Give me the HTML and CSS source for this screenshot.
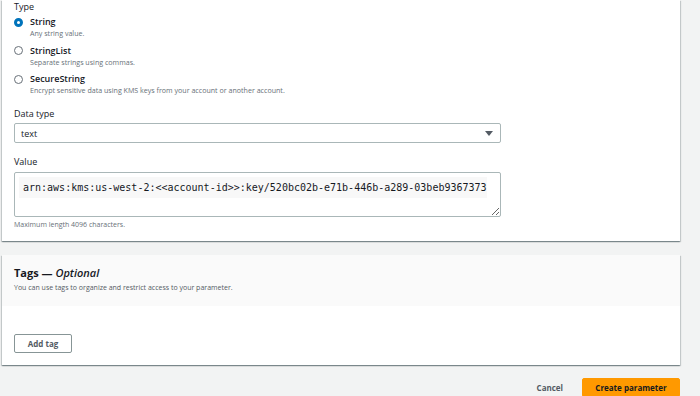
FILE: index.html
```html
<!DOCTYPE html>
<html lang="en">
<head>
    <meta charset="UTF-8">
    <meta name="viewport" content="width=device-width, initial-scale=1.0">
    <title>Create parameter</title>
    <link rel="stylesheet" href="styles.css">
</head>
<body>
    <div class="page">
        <section class="card card-main">
            <div class="field">
                <div class="label">Type</div>
                <div class="radio-group">
                    <div class="radio checked">
                        <span class="dot"></span>
                        <div class="radio-text">
                            <div class="radio-title">String</div>
                            <div class="radio-desc">Any string value.</div>
                        </div>
                    </div>
                    <div class="radio">
                        <span class="dot"></span>
                        <div class="radio-text">
                            <div class="radio-title">StringList</div>
                            <div class="radio-desc">Separate strings using commas.</div>
                        </div>
                    </div>
                    <div class="radio">
                        <span class="dot"></span>
                        <div class="radio-text">
                            <div class="radio-title">SecureString</div>
                            <div class="radio-desc">Encrypt sensitive data using KMS keys from your account or another account.</div>
                        </div>
                    </div>
                </div>
            </div>

            <div class="field">
                <div class="label">Data type</div>
                <div class="select">
                    <span>text</span>
                    <svg width="8" height="5" viewBox="0 0 8 5"><path d="M0 0 H8 L4 5 Z" fill="#545b64"/></svg>
                </div>
            </div>

            <div class="field">
                <div class="label">Value</div>
                <div class="textarea">
                    <code class="code">arn:aws:kms:us-west-2:&lt;&lt;account-id&gt;&gt;:key/520bc02b-e71b-446b-a289-03beb9367373</code>
                </div>
                <div class="hint">Maximum length 4096 characters.</div>
            </div>
        </section>

        <section class="card card-tags">
            <div class="tags-header">
                <h2>Tags — <em>Optional</em></h2>
                <p>You can use tags to organize and restrict access to your parameter.</p>
            </div>
            <div class="tags-body">
                <button class="btn btn-normal">Add tag</button>
            </div>
        </section>

        <div class="footer">
            <button class="btn btn-link">Cancel</button>
            <button class="btn btn-primary">Create parameter</button>
        </div>
    </div>
</body>
</html>
```

FILE: styles.css
```css
body {
    margin: 0;
    padding: 0;
    background-color: #f2f3f3;
    font-family: 'Open Sans', 'Noto Sans', sans-serif;
    color: #16191f;
}

.page {
    width: 678px;
    padding-left: 2px;
}

.card {
    background-color: #ffffff;
    box-shadow: 0 1px 1px 0 rgba(0, 28, 36, 0.3), 1px 1px 1px 0 rgba(0, 28, 36, 0.15), -1px 1px 1px 0 rgba(0, 28, 36, 0.15);
}

.card-main {
    padding: 1px 12px 11px;
}

.field + .field {
    margin-top: 12.5px;
}

.label {
    font-size: 9px;
    line-height: 12px;
    color: #16191f;
}

/* radios */
.radio-group {
    margin-top: 3px;
    display: flex;
    flex-direction: column;
    gap: 6px;
}

.radio {
    display: flex;
    gap: 7px;
}

.dot {
    box-sizing: border-box;
    width: 9px;
    height: 9px;
    margin: 1.5px 0 0 0;
    border: 1px solid #687078;
    border-radius: 50%;
    flex-shrink: 0;
}

.radio.checked .dot {
    border: 3px solid #0073bb;
    background-color: #ffffff;
}

.radio-title {
    font-size: 9px;
    line-height: 12px;
    font-weight: 600;
}

.radio-desc {
    font-size: 7.1px;
    line-height: 10.5px;
    color: #687078;
}

/* select */
.select {
    margin-top: 3px;
    width: 487px;
    height: 20px;
    box-sizing: border-box;
    border: 1px solid #aab7b8;
    border-radius: 2px;
    display: flex;
    align-items: center;
    justify-content: space-between;
    padding: 0 7px 0 6px;
    font-size: 9px;
}

/* textarea */
.textarea {
    margin-top: 4px;
    width: 487px;
    height: 45px;
    box-sizing: border-box;
    border: 1px solid #aab7b8;
    border-radius: 2px;
    padding: 4px 13px 0 4px;
    resize: vertical;
    overflow: hidden;
}

.code {
    display: block;
    background-color: #f8f8f8;
    font-family: 'DejaVu Sans Mono', monospace;
    font-size: 10px;
    line-height: 21px;
    padding: 0 4px;
    white-space: nowrap;
    color: #16191f;
}

.hint {
    margin-top: 3px;
    font-size: 7px;
    line-height: 10px;
    color: #687078;
}

/* tags */
.card-tags {
    margin-top: 14px;
}

.tags-header {
    background-color: #fafafa;
    padding: 10px 12px 13px;
}

.tags-header h2 {
    margin: 0;
    font-size: 11px;
    line-height: 16px;
    font-weight: 700;
}

.tags-header h2 em {
    font-weight: 600;
}

.tags-header p {
    margin: 2px 0 0;
    font-size: 7px;
    line-height: 10px;
    color: #545b64;
}

.tags-body {
    padding: 24px 12px 12px;
}

/* buttons */
.btn {
    font-family: 'Open Sans', 'Noto Sans', sans-serif;
    font-size: 8px;
    font-weight: 700;
    height: 19px;
    box-sizing: border-box;
    border-radius: 2px;
    cursor: pointer;
    padding: 0 11px;
}

.btn-normal {
    width: 58px;
    background-color: #ffffff;
    border: 1px solid #879596;
    color: #545b64;
}

.footer {
    display: flex;
    justify-content: flex-end;
    align-items: center;
    gap: 8px;
    padding-top: 13px;
}

.btn-link {
    background: none;
    border: none;
    color: #545b64;
}

.btn-primary {
    width: 98px;
    background-color: #ff9900;
    border: 1px solid #ff9900;
    color: #16191f;
}
```
